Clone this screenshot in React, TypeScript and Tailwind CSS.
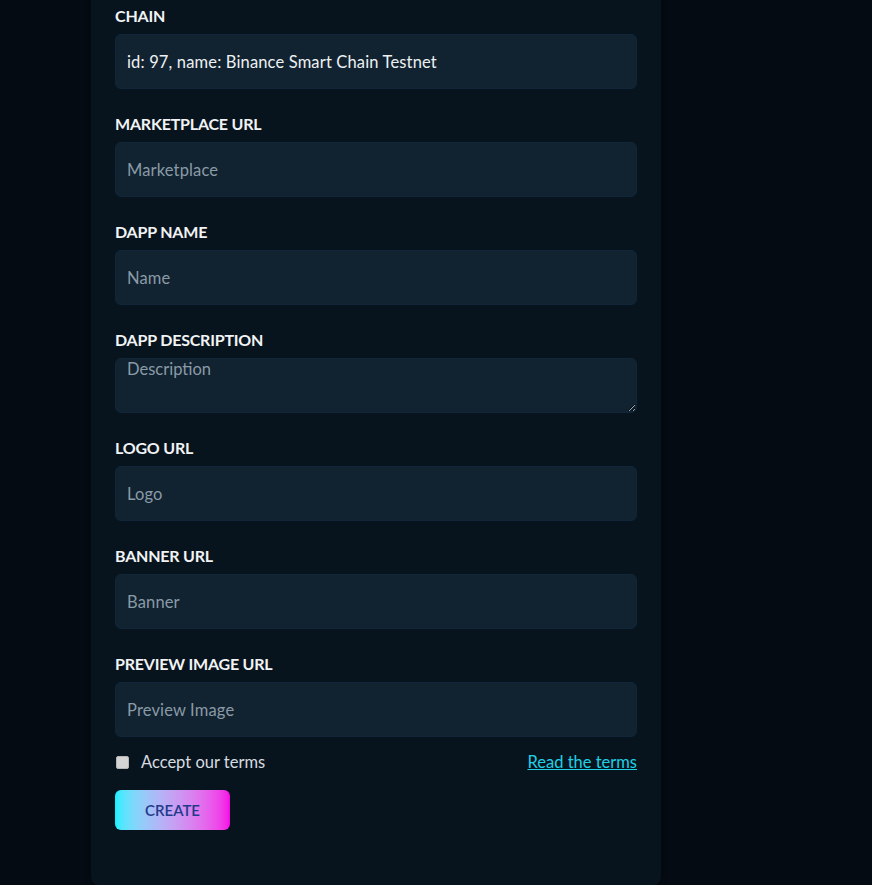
import { useState } from "react";

type Field = {
  label: string;
  placeholder: string;
  value?: string;
  area?: boolean;
};

const fields: Field[] = [
  { label: "CHAIN", placeholder: "Chain", value: "id: 97, name: Binance Smart Chain Testnet" },
  { label: "MARKETPLACE URL", placeholder: "Marketplace" },
  { label: "DAPP NAME", placeholder: "Name" },
  { label: "DAPP DESCRIPTION", placeholder: "Description", area: true },
  { label: "LOGO URL", placeholder: "Logo" },
  { label: "BANNER URL", placeholder: "Banner" },
  { label: "PREVIEW IMAGE URL", placeholder: "Preview Image" },
];

export default function App() {
  const [accepted, setAccepted] = useState(false);

  return (
    <div
      className="min-h-screen bg-[#040b12] pl-[91px]"
      style={{ fontFamily: "Lato, 'Noto Sans', sans-serif" }}
    >
      <div className="w-[570px] -mt-[20px] pt-[24px] px-6 pb-[55px] bg-[#08141d] rounded-b-lg shadow-[0_0_6px_rgba(0,0,0,0.5)]">
        <div className="flex flex-col gap-[23px]">
          {fields.map((f) => (
            <div key={f.label} className="flex flex-col">
              <label className="text-[16px] leading-6 font-bold text-[#f1f3f5] mb-[6px] tracking-[-0.2px]">
                {f.label}
              </label>
              {f.area ? (
                <textarea
                  placeholder={f.placeholder}
                  className="h-[55px] w-full rounded-md bg-[#112330] px-[11px] pt-0 leading-5 text-[16.5px] text-[#e6e9ec] placeholder:text-[#8a9aa7] outline-none border border-[#12263a]"
                />
              ) : (
                <input
                  placeholder={f.placeholder}
                  defaultValue={f.value}
                  className="h-[55px] w-full rounded-md bg-[#112330] px-[11px] text-[16.5px] tracking-[0.15px] text-[#eef1f4] placeholder:text-[#8a9aa7] outline-none border border-[#12263a]"
                />
              )}
            </div>
          ))}
        </div>
        <div className="flex items-center justify-between mt-[13px]">
          <label className="flex items-center gap-3 text-[16.5px] text-[#d7dce0]">
            <input
              type="checkbox"
              checked={accepted}
              onChange={(e) => setAccepted(e.target.checked)}
              className="appearance-none w-[13px] h-[13px] ml-[1px] rounded-[2px] bg-[#d4d4d4] border border-[#b5b5b5] checked:bg-[#1fd0e6]"
            />
            Accept our terms
          </label>
          <a href="#" className="text-[16.5px] text-[#1fd0e6] underline">
            Read the terms
          </a>
        </div>
        <button className="mt-[15px] h-10 w-[115px] rounded-md bg-gradient-to-r from-[#00f0ff] to-[#f500e6] text-[15px] font-semibold text-[#1f3b8a]">
          CREATE
        </button>
      </div>
    </div>
  );
}
